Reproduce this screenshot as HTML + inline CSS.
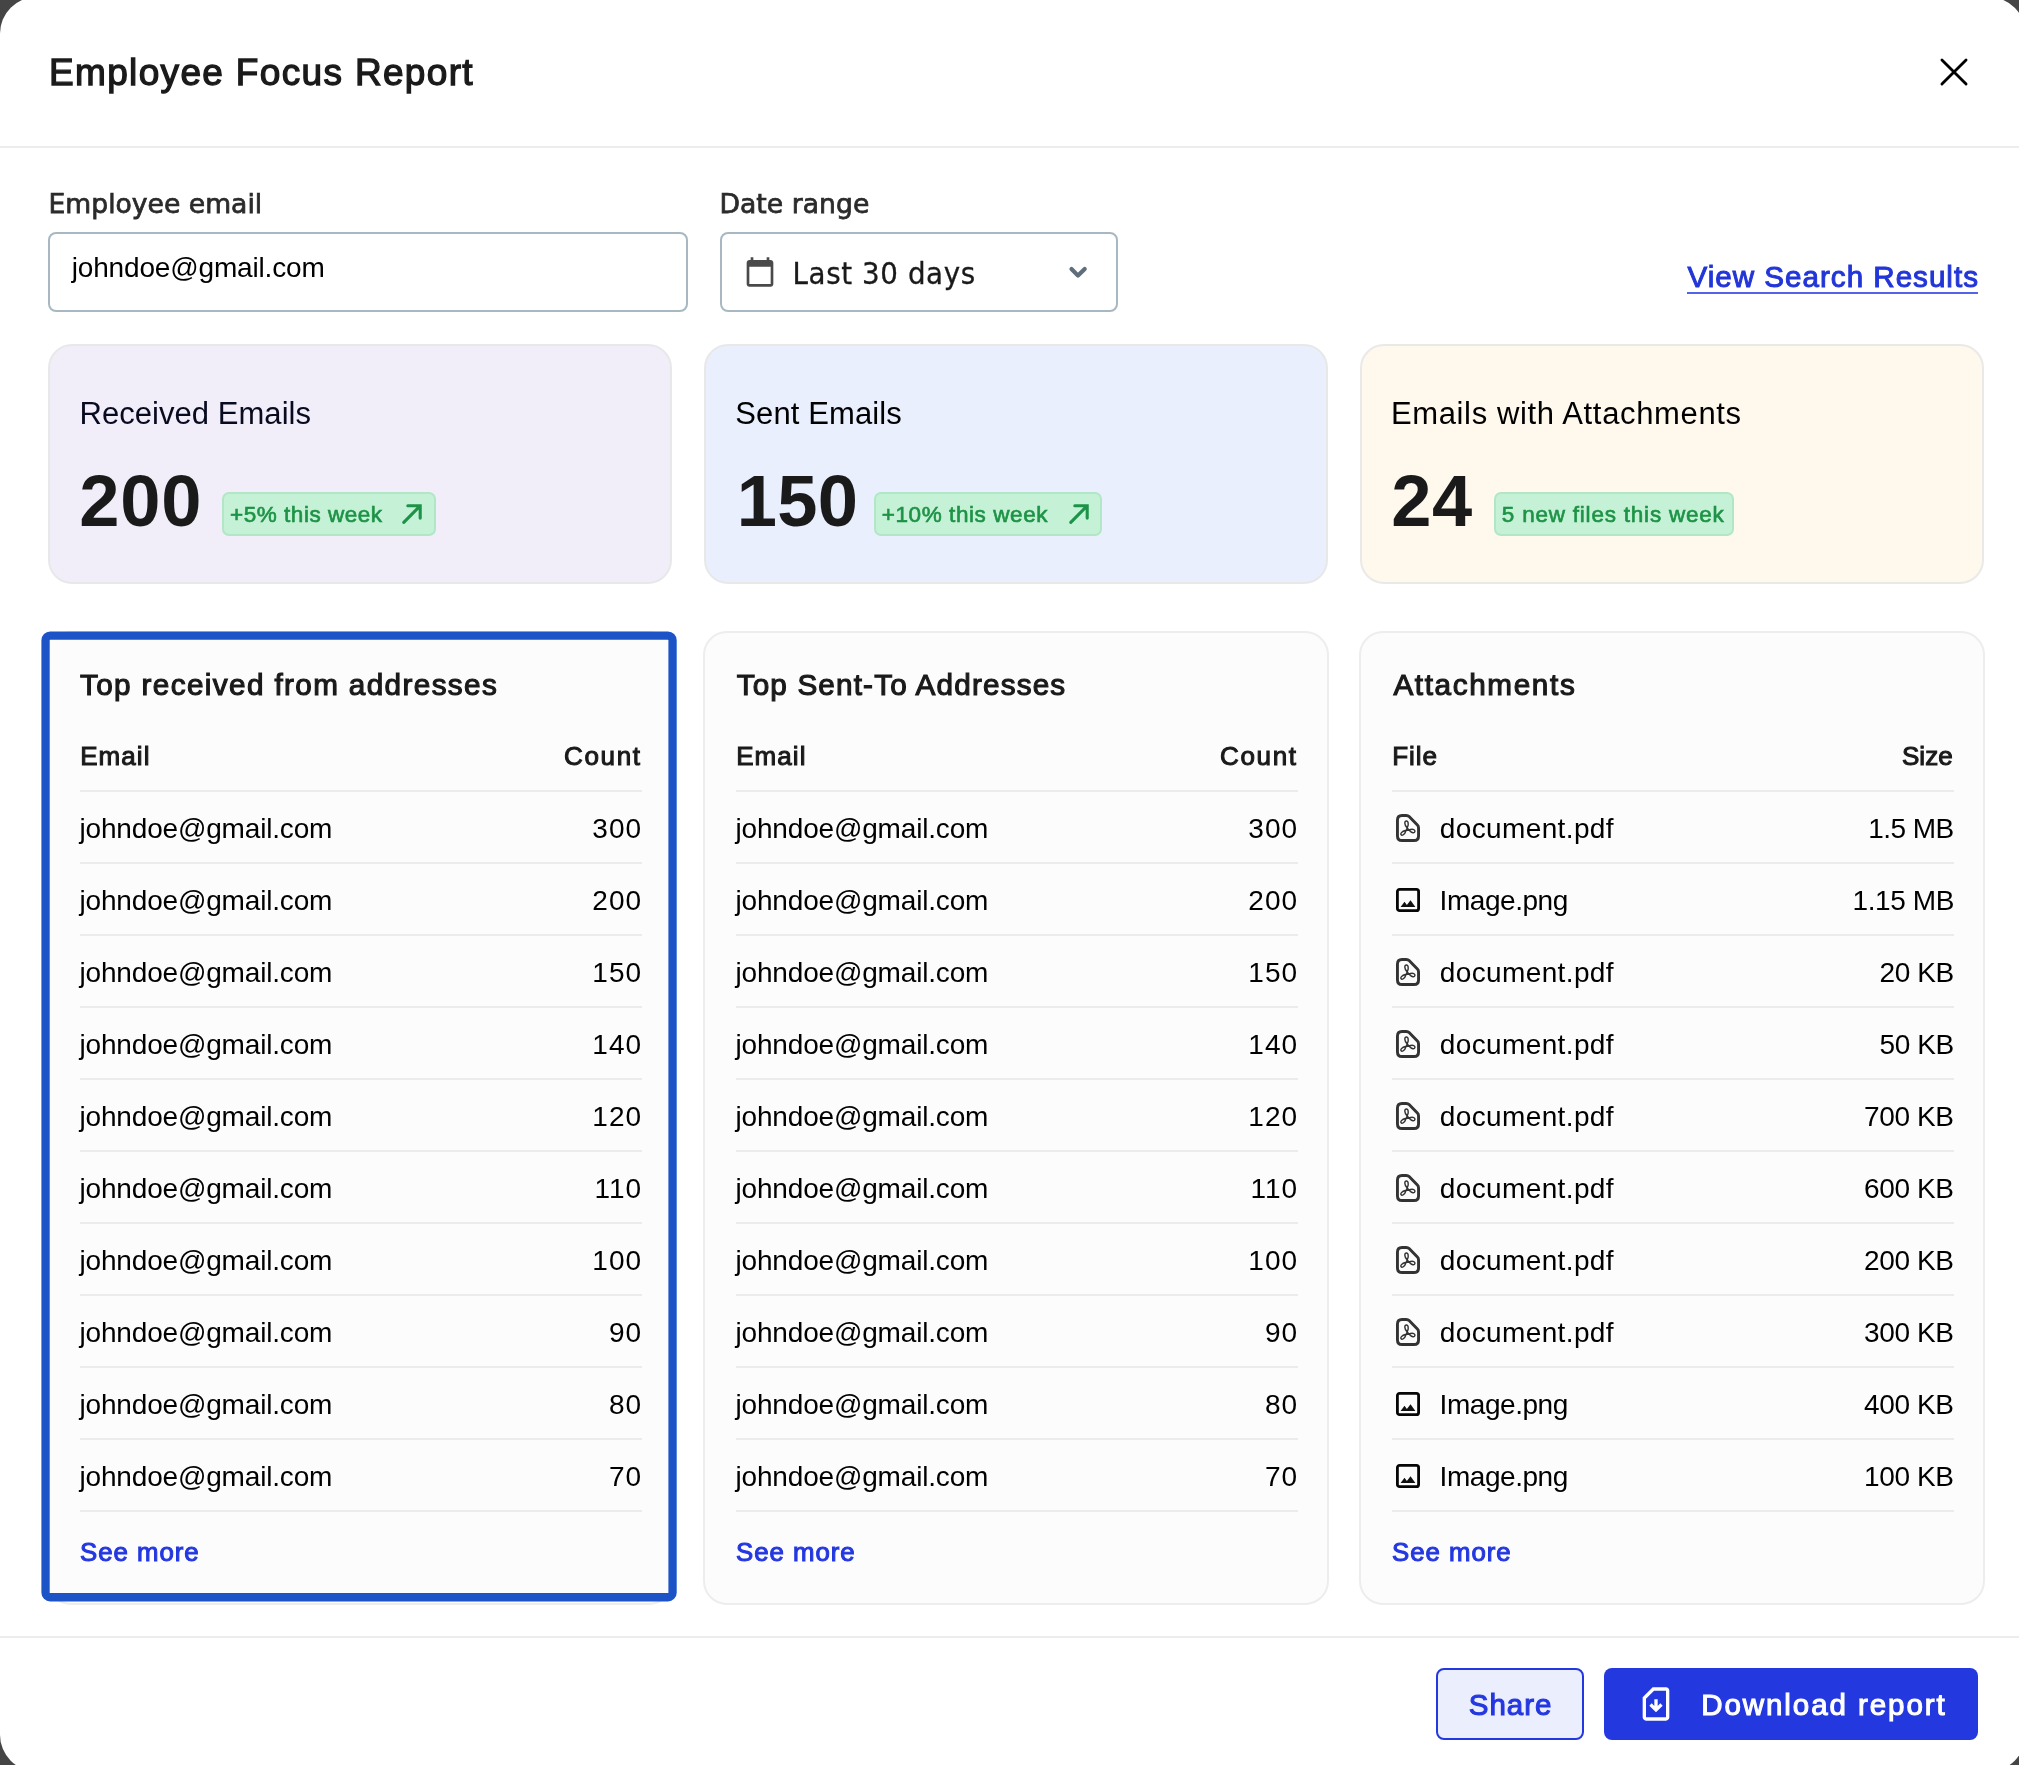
<!DOCTYPE html>
<html lang="en">
<head>
<meta charset="utf-8">
<title>Employee Focus Report</title>
<style>
*{box-sizing:border-box;margin:0;padding:0}
html,body{width:2019px;height:1765px;overflow:hidden;background:#454545;font-family:"Liberation Sans",Arial,sans-serif}
.page{position:absolute;left:0;top:0;width:2019px;height:1765px;overflow:hidden;will-change:transform}
.t{position:absolute;line-height:1;white-space:nowrap;font-weight:normal;font-style:normal;text-decoration:none}
.hr{position:absolute;left:0;width:2019px;height:2px;background:#ededed}
.field{position:absolute;top:232px;height:80px;border:2px solid #a8b8c3;border-radius:8px;background:#fff}
.stat{position:absolute;top:344px;width:624px;height:240px;border-radius:24px;border:2px solid}
.badge{position:absolute;top:492px;height:44px;border-radius:7px;background:#c5f1d7;border:2px solid #b1e7c6}
.card{position:absolute;top:631px;width:626px;height:974px;border-radius:24px;border:2px solid #ededed;background:#fcfcfc}
.sep{position:absolute;height:2px;width:562px;background:#ececec}
.btn{position:absolute;top:1668px;height:72px;border-radius:8px}
svg{position:absolute;overflow:visible}
</style>
</head>
<body>
<div class="page">
<svg style="left:0;top:0" width="2019" height="1765" viewBox="0 0 2019 1765"><rect x="0" y="-3" width="2025.4" height="1774.4" rx="36.5" fill="#fff"/></svg>
<header>
<h1 class="t" style="left:49.01px;top:54px;font-size:37px;color:#1a1a1a;letter-spacing:1.337px;-webkit-text-stroke:1.3px #1a1a1a;">Employee Focus Report</h1>
<svg style="left:1938px;top:56px" width="32" height="32" viewBox="0 0 32 32"><path d="M3.95 4.1 L28.05 27.9 M28.05 4.1 L3.95 27.9" stroke="#000" stroke-width="2.85" stroke-linecap="round" fill="none"/></svg>
<div class="hr" style="top:146px"></div>
</header>
<section>
<label class="t" style="left:48.54px;top:191px;font-size:26.6px;color:#2b2b2b;letter-spacing:0.011px;-webkit-text-stroke:0.75px #2b2b2b;font-family:'DejaVu Sans',sans-serif;">Employee email</label>
<div class="field" style="left:48px;width:640px"></div>
<div class="t" style="left:71.74px;top:254px;font-size:28px;color:#000;letter-spacing:-0.163px;">johndoe@gmail.com</div>
<label class="t" style="left:719.44px;top:191px;font-size:26.6px;color:#2b2b2b;letter-spacing:0.054px;-webkit-text-stroke:0.75px #2b2b2b;font-family:'DejaVu Sans',sans-serif;">Date range</label>
<div class="field" style="left:720px;width:398px"></div>
<svg style="left:744px;top:256px" width="32" height="32" viewBox="0 0 24 24"><path fill="#4a4a4a" d="M20 3h-1V1h-2v2H7V1H5v2H4c-1.1 0-2 .9-2 2v16c0 1.1.9 2 2 2h16c1.1 0 2-.9 2-2V5c0-1.1-.9-2-2-2zm0 18H4V8h16v13z"/></svg>
<div class="t" style="left:792.55px;top:258px;font-size:30.8px;color:#1a1a1a;letter-spacing:0.604px;-webkit-text-stroke:0.3px #1a1a1a;font-family:'DejaVu Sans Condensed','DejaVu Sans',sans-serif;font-stretch:condensed;">Last 30 days</div>
<svg style="left:1064px;top:258px" width="28" height="28" viewBox="0 0 28 28"><path d="M7.5 11 L14 17.6 L20.7 11" stroke="#5f6e7b" stroke-width="4.2" stroke-linecap="round" stroke-linejoin="round" fill="none"/></svg>
<a class="t" style="left:1687.55px;top:262px;font-size:29.6px;color:#2236d8;letter-spacing:0.994px;-webkit-text-stroke:1.0px #2236d8;">View Search Results</a>
<div style="position:absolute;left:1687px;top:292px;width:290.6px;height:2px;background:#5464e8"></div>
</section>
<section>
<div class="stat" style="left:48px;background:#f1eefa;border-color:#e8e8e9"></div>
<div class="stat" style="left:704px;background:#eaeffe;border-color:#e8e8e9"></div>
<div class="stat" style="left:1360px;background:#fff8ec;border-color:#e9e9e8"></div>
<h3 class="t" style="left:79.52px;top:398px;font-size:31px;color:#080b1f;letter-spacing:0.044px;">Received Emails</h3>
<h3 class="t" style="left:735.27px;top:398px;font-size:31px;color:#000;letter-spacing:0.111px;">Sent Emails</h3>
<h3 class="t" style="left:1390.92px;top:398px;font-size:31px;color:#000;letter-spacing:0.644px;">Emails with Attachments</h3>
<div class="t" style="left:79.19px;top:465px;font-size:72.3px;font-weight:bold;color:#1a1a1a;letter-spacing:0.852px;">200</div>
<div class="t" style="left:736.85px;top:465px;font-size:72.3px;font-weight:bold;color:#1a1a1a;letter-spacing:0.224px;">150</div>
<div class="t" style="left:1391.29px;top:465px;font-size:72.3px;font-weight:bold;color:#1a1a1a;letter-spacing:0.447px;">24</div>
<div class="badge" style="left:222px;width:214px"></div>
<div class="t" style="left:230.07px;top:504px;font-size:22.5px;color:#1d9346;letter-spacing:0.524px;-webkit-text-stroke:0.65px #1d9346;">+5% this week</div>
<svg style="left:400px;top:500px" width="28" height="28" viewBox="0 0 28 28"><path d="M7.8 5.8 H20.2 V18.1 M20.2 5.8 L3.8 22.3" stroke="#1c9347" stroke-width="3.1" stroke-linecap="round" stroke-linejoin="miter" fill="none"/></svg>
<div class="badge" style="left:874px;width:228px"></div>
<div class="t" style="left:881.77px;top:504px;font-size:22.5px;color:#1d9346;letter-spacing:0.579px;-webkit-text-stroke:0.65px #1d9346;">+10% this week</div>
<svg style="left:1066.7px;top:500px" width="28" height="28" viewBox="0 0 28 28"><path d="M7.8 5.8 H20.2 V18.1 M20.2 5.8 L3.8 22.3" stroke="#1c9347" stroke-width="3.1" stroke-linecap="round" stroke-linejoin="miter" fill="none"/></svg>
<div class="badge" style="left:1494px;width:240px"></div>
<div class="t" style="left:1501.80px;top:504px;font-size:22.5px;color:#1d9346;letter-spacing:0.785px;-webkit-text-stroke:0.65px #1d9346;">5 new files this week</div>
</section>
<section>
<div class="card" style="left:47px"></div>
<svg style="left:0;top:0" width="2019" height="1765" viewBox="0 0 2019 1765"><rect x="45.55" y="635.55" width="627" height="961.7" rx="4.6" fill="#fcfcfc" stroke="#1c54c8" stroke-width="8.3"/></svg>
<h2 class="t" style="left:80.03px;top:670px;font-size:29.7px;color:#1a1a1a;letter-spacing:1.369px;-webkit-text-stroke:1.15px #1a1a1a;">Top received from addresses</h2>
<div class="t" style="left:80.20px;top:743px;font-size:26.0px;color:#1a1a1a;letter-spacing:1.056px;-webkit-text-stroke:1.05px #1a1a1a;">Email</div>
<div class="t" style="left:564.11px;top:743px;font-size:26.0px;color:#1a1a1a;letter-spacing:1.635px;-webkit-text-stroke:1.05px #1a1a1a;">Count</div>
<div class="sep" style="left:80px;top:790px"></div>
<div class="sep" style="left:80px;top:862px"></div>
<div class="sep" style="left:80px;top:934px"></div>
<div class="sep" style="left:80px;top:1006px"></div>
<div class="sep" style="left:80px;top:1078px"></div>
<div class="sep" style="left:80px;top:1150px"></div>
<div class="sep" style="left:80px;top:1222px"></div>
<div class="sep" style="left:80px;top:1294px"></div>
<div class="sep" style="left:80px;top:1366px"></div>
<div class="sep" style="left:80px;top:1438px"></div>
<div class="sep" style="left:80px;top:1510px"></div>
<div class="t" style="left:79.54px;top:815px;font-size:28px;color:#000;letter-spacing:-0.176px;">johndoe@gmail.com</div>
<div class="t" style="left:592.32px;top:815px;font-size:28px;color:#000;letter-spacing:1.000px;">300</div>
<div class="t" style="left:79.54px;top:887px;font-size:28px;color:#000;letter-spacing:-0.176px;">johndoe@gmail.com</div>
<div class="t" style="left:592.32px;top:887px;font-size:28px;color:#000;letter-spacing:1.000px;">200</div>
<div class="t" style="left:79.54px;top:959px;font-size:28px;color:#000;letter-spacing:-0.176px;">johndoe@gmail.com</div>
<div class="t" style="left:592.32px;top:959px;font-size:28px;color:#000;letter-spacing:1.000px;">150</div>
<div class="t" style="left:79.54px;top:1031px;font-size:28px;color:#000;letter-spacing:-0.176px;">johndoe@gmail.com</div>
<div class="t" style="left:592.32px;top:1031px;font-size:28px;color:#000;letter-spacing:1.000px;">140</div>
<div class="t" style="left:79.54px;top:1103px;font-size:28px;color:#000;letter-spacing:-0.176px;">johndoe@gmail.com</div>
<div class="t" style="left:592.32px;top:1103px;font-size:28px;color:#000;letter-spacing:1.000px;">120</div>
<div class="t" style="left:79.54px;top:1175px;font-size:28px;color:#000;letter-spacing:-0.176px;">johndoe@gmail.com</div>
<div class="t" style="left:594.56px;top:1175px;font-size:28px;color:#000;letter-spacing:1.000px;">110</div>
<div class="t" style="left:79.54px;top:1247px;font-size:28px;color:#000;letter-spacing:-0.176px;">johndoe@gmail.com</div>
<div class="t" style="left:592.32px;top:1247px;font-size:28px;color:#000;letter-spacing:1.000px;">100</div>
<div class="t" style="left:79.54px;top:1319px;font-size:28px;color:#000;letter-spacing:-0.176px;">johndoe@gmail.com</div>
<div class="t" style="left:608.95px;top:1319px;font-size:28px;color:#000;letter-spacing:1.000px;">90</div>
<div class="t" style="left:79.54px;top:1391px;font-size:28px;color:#000;letter-spacing:-0.176px;">johndoe@gmail.com</div>
<div class="t" style="left:608.95px;top:1391px;font-size:28px;color:#000;letter-spacing:1.000px;">80</div>
<div class="t" style="left:79.54px;top:1463px;font-size:28px;color:#000;letter-spacing:-0.176px;">johndoe@gmail.com</div>
<div class="t" style="left:608.95px;top:1463px;font-size:28px;color:#000;letter-spacing:1.000px;">70</div>
<a class="t" style="left:80.10px;top:1540px;font-size:25.8px;color:#2438e0;letter-spacing:0.966px;-webkit-text-stroke:1.05px #2438e0;">See more</a>
<div class="card" style="left:703px"></div>
<h2 class="t" style="left:736.63px;top:670px;font-size:29.7px;color:#1a1a1a;letter-spacing:1.162px;-webkit-text-stroke:1.15px #1a1a1a;">Top Sent-To Addresses</h2>
<div class="t" style="left:736.20px;top:743px;font-size:26.0px;color:#1a1a1a;letter-spacing:1.056px;-webkit-text-stroke:1.05px #1a1a1a;">Email</div>
<div class="t" style="left:1220.11px;top:743px;font-size:26.0px;color:#1a1a1a;letter-spacing:1.635px;-webkit-text-stroke:1.05px #1a1a1a;">Count</div>
<div class="sep" style="left:736px;top:790px"></div>
<div class="sep" style="left:736px;top:862px"></div>
<div class="sep" style="left:736px;top:934px"></div>
<div class="sep" style="left:736px;top:1006px"></div>
<div class="sep" style="left:736px;top:1078px"></div>
<div class="sep" style="left:736px;top:1150px"></div>
<div class="sep" style="left:736px;top:1222px"></div>
<div class="sep" style="left:736px;top:1294px"></div>
<div class="sep" style="left:736px;top:1366px"></div>
<div class="sep" style="left:736px;top:1438px"></div>
<div class="sep" style="left:736px;top:1510px"></div>
<div class="t" style="left:735.54px;top:815px;font-size:28px;color:#000;letter-spacing:-0.176px;">johndoe@gmail.com</div>
<div class="t" style="left:1248.32px;top:815px;font-size:28px;color:#000;letter-spacing:1.000px;">300</div>
<div class="t" style="left:735.54px;top:887px;font-size:28px;color:#000;letter-spacing:-0.176px;">johndoe@gmail.com</div>
<div class="t" style="left:1248.32px;top:887px;font-size:28px;color:#000;letter-spacing:1.000px;">200</div>
<div class="t" style="left:735.54px;top:959px;font-size:28px;color:#000;letter-spacing:-0.176px;">johndoe@gmail.com</div>
<div class="t" style="left:1248.32px;top:959px;font-size:28px;color:#000;letter-spacing:1.000px;">150</div>
<div class="t" style="left:735.54px;top:1031px;font-size:28px;color:#000;letter-spacing:-0.176px;">johndoe@gmail.com</div>
<div class="t" style="left:1248.32px;top:1031px;font-size:28px;color:#000;letter-spacing:1.000px;">140</div>
<div class="t" style="left:735.54px;top:1103px;font-size:28px;color:#000;letter-spacing:-0.176px;">johndoe@gmail.com</div>
<div class="t" style="left:1248.32px;top:1103px;font-size:28px;color:#000;letter-spacing:1.000px;">120</div>
<div class="t" style="left:735.54px;top:1175px;font-size:28px;color:#000;letter-spacing:-0.176px;">johndoe@gmail.com</div>
<div class="t" style="left:1250.56px;top:1175px;font-size:28px;color:#000;letter-spacing:1.000px;">110</div>
<div class="t" style="left:735.54px;top:1247px;font-size:28px;color:#000;letter-spacing:-0.176px;">johndoe@gmail.com</div>
<div class="t" style="left:1248.32px;top:1247px;font-size:28px;color:#000;letter-spacing:1.000px;">100</div>
<div class="t" style="left:735.54px;top:1319px;font-size:28px;color:#000;letter-spacing:-0.176px;">johndoe@gmail.com</div>
<div class="t" style="left:1264.95px;top:1319px;font-size:28px;color:#000;letter-spacing:1.000px;">90</div>
<div class="t" style="left:735.54px;top:1391px;font-size:28px;color:#000;letter-spacing:-0.176px;">johndoe@gmail.com</div>
<div class="t" style="left:1264.95px;top:1391px;font-size:28px;color:#000;letter-spacing:1.000px;">80</div>
<div class="t" style="left:735.54px;top:1463px;font-size:28px;color:#000;letter-spacing:-0.176px;">johndoe@gmail.com</div>
<div class="t" style="left:1264.95px;top:1463px;font-size:28px;color:#000;letter-spacing:1.000px;">70</div>
<a class="t" style="left:736.10px;top:1540px;font-size:25.8px;color:#2438e0;letter-spacing:0.966px;-webkit-text-stroke:1.05px #2438e0;">See more</a>
<div class="card" style="left:1359px"></div>
<h2 class="t" style="left:1393.38px;top:670px;font-size:29.7px;color:#1a1a1a;letter-spacing:1.635px;-webkit-text-stroke:1.15px #1a1a1a;">Attachments</h2>
<div class="t" style="left:1392.20px;top:743px;font-size:26.0px;color:#1a1a1a;letter-spacing:0.954px;-webkit-text-stroke:1.05px #1a1a1a;">File</div>
<div class="t" style="left:1901.94px;top:743px;font-size:26.0px;color:#1a1a1a;letter-spacing:0.068px;-webkit-text-stroke:1.05px #1a1a1a;">Size</div>
<div class="sep" style="left:1392px;top:790px"></div>
<div class="sep" style="left:1392px;top:862px"></div>
<div class="sep" style="left:1392px;top:934px"></div>
<div class="sep" style="left:1392px;top:1006px"></div>
<div class="sep" style="left:1392px;top:1078px"></div>
<div class="sep" style="left:1392px;top:1150px"></div>
<div class="sep" style="left:1392px;top:1222px"></div>
<div class="sep" style="left:1392px;top:1294px"></div>
<div class="sep" style="left:1392px;top:1366px"></div>
<div class="sep" style="left:1392px;top:1438px"></div>
<div class="sep" style="left:1392px;top:1510px"></div>
<svg style="left:1396px;top:814px" width="24" height="28" viewBox="0 0 24 28"><path d="M1.45 6 Q1.45 1.45 6 1.45 H10.3 Q12 1.45 13.1 2.6 L21.4 11.1 Q22.55 12.3 22.55 14 V22 Q22.55 26.55 18 26.55 H6 Q1.45 26.55 1.45 22 Z" stroke="#333" stroke-width="2.9" fill="none" stroke-linejoin="round"/><path d="M11.2 14 C4 5.5 15.7 3.8 11.2 14 L10.2 16.2 C0 18.7 6.8 26.1 10.2 16.2 L12.9 16 C22.3 12.7 19.5 23.5 12.9 16 Z" stroke="#333" stroke-width="1.45" fill="none" stroke-linejoin="round"/></svg>
<div class="t" style="left:1439.85px;top:815px;font-size:28px;color:#000;letter-spacing:0.368px;">document.pdf</div>
<div class="t" style="left:1868.18px;top:815px;font-size:28px;color:#000;letter-spacing:-0.535px;">1.5 MB</div>
<svg style="left:1396px;top:888px" width="24" height="24" viewBox="0 0 24 24"><rect x="1.4" y="1.4" width="21.2" height="21.2" rx="2.2" stroke="#060606" stroke-width="2.8" fill="none"/><path d="M4.6 19 L8.5 13.8 L10.9 17 L14.5 12.2 L19.4 19 Z" fill="#111"/></svg>
<div class="t" style="left:1439.59px;top:887px;font-size:28px;color:#000;letter-spacing:-0.447px;">Image.png</div>
<div class="t" style="left:1852.48px;top:887px;font-size:28px;color:#000;letter-spacing:-0.402px;">1.15 MB</div>
<svg style="left:1396px;top:958px" width="24" height="28" viewBox="0 0 24 28"><path d="M1.45 6 Q1.45 1.45 6 1.45 H10.3 Q12 1.45 13.1 2.6 L21.4 11.1 Q22.55 12.3 22.55 14 V22 Q22.55 26.55 18 26.55 H6 Q1.45 26.55 1.45 22 Z" stroke="#333" stroke-width="2.9" fill="none" stroke-linejoin="round"/><path d="M11.2 14 C4 5.5 15.7 3.8 11.2 14 L10.2 16.2 C0 18.7 6.8 26.1 10.2 16.2 L12.9 16 C22.3 12.7 19.5 23.5 12.9 16 Z" stroke="#333" stroke-width="1.45" fill="none" stroke-linejoin="round"/></svg>
<div class="t" style="left:1439.85px;top:959px;font-size:28px;color:#000;letter-spacing:0.368px;">document.pdf</div>
<div class="t" style="left:1879.47px;top:959px;font-size:28px;color:#000;letter-spacing:-0.400px;">20 KB</div>
<svg style="left:1396px;top:1030px" width="24" height="28" viewBox="0 0 24 28"><path d="M1.45 6 Q1.45 1.45 6 1.45 H10.3 Q12 1.45 13.1 2.6 L21.4 11.1 Q22.55 12.3 22.55 14 V22 Q22.55 26.55 18 26.55 H6 Q1.45 26.55 1.45 22 Z" stroke="#333" stroke-width="2.9" fill="none" stroke-linejoin="round"/><path d="M11.2 14 C4 5.5 15.7 3.8 11.2 14 L10.2 16.2 C0 18.7 6.8 26.1 10.2 16.2 L12.9 16 C22.3 12.7 19.5 23.5 12.9 16 Z" stroke="#333" stroke-width="1.45" fill="none" stroke-linejoin="round"/></svg>
<div class="t" style="left:1439.85px;top:1031px;font-size:28px;color:#000;letter-spacing:0.368px;">document.pdf</div>
<div class="t" style="left:1879.47px;top:1031px;font-size:28px;color:#000;letter-spacing:-0.400px;">50 KB</div>
<svg style="left:1396px;top:1102px" width="24" height="28" viewBox="0 0 24 28"><path d="M1.45 6 Q1.45 1.45 6 1.45 H10.3 Q12 1.45 13.1 2.6 L21.4 11.1 Q22.55 12.3 22.55 14 V22 Q22.55 26.55 18 26.55 H6 Q1.45 26.55 1.45 22 Z" stroke="#333" stroke-width="2.9" fill="none" stroke-linejoin="round"/><path d="M11.2 14 C4 5.5 15.7 3.8 11.2 14 L10.2 16.2 C0 18.7 6.8 26.1 10.2 16.2 L12.9 16 C22.3 12.7 19.5 23.5 12.9 16 Z" stroke="#333" stroke-width="1.45" fill="none" stroke-linejoin="round"/></svg>
<div class="t" style="left:1439.85px;top:1103px;font-size:28px;color:#000;letter-spacing:0.368px;">document.pdf</div>
<div class="t" style="left:1864.10px;top:1103px;font-size:28px;color:#000;letter-spacing:-0.400px;">700 KB</div>
<svg style="left:1396px;top:1174px" width="24" height="28" viewBox="0 0 24 28"><path d="M1.45 6 Q1.45 1.45 6 1.45 H10.3 Q12 1.45 13.1 2.6 L21.4 11.1 Q22.55 12.3 22.55 14 V22 Q22.55 26.55 18 26.55 H6 Q1.45 26.55 1.45 22 Z" stroke="#333" stroke-width="2.9" fill="none" stroke-linejoin="round"/><path d="M11.2 14 C4 5.5 15.7 3.8 11.2 14 L10.2 16.2 C0 18.7 6.8 26.1 10.2 16.2 L12.9 16 C22.3 12.7 19.5 23.5 12.9 16 Z" stroke="#333" stroke-width="1.45" fill="none" stroke-linejoin="round"/></svg>
<div class="t" style="left:1439.85px;top:1175px;font-size:28px;color:#000;letter-spacing:0.368px;">document.pdf</div>
<div class="t" style="left:1864.10px;top:1175px;font-size:28px;color:#000;letter-spacing:-0.400px;">600 KB</div>
<svg style="left:1396px;top:1246px" width="24" height="28" viewBox="0 0 24 28"><path d="M1.45 6 Q1.45 1.45 6 1.45 H10.3 Q12 1.45 13.1 2.6 L21.4 11.1 Q22.55 12.3 22.55 14 V22 Q22.55 26.55 18 26.55 H6 Q1.45 26.55 1.45 22 Z" stroke="#333" stroke-width="2.9" fill="none" stroke-linejoin="round"/><path d="M11.2 14 C4 5.5 15.7 3.8 11.2 14 L10.2 16.2 C0 18.7 6.8 26.1 10.2 16.2 L12.9 16 C22.3 12.7 19.5 23.5 12.9 16 Z" stroke="#333" stroke-width="1.45" fill="none" stroke-linejoin="round"/></svg>
<div class="t" style="left:1439.85px;top:1247px;font-size:28px;color:#000;letter-spacing:0.368px;">document.pdf</div>
<div class="t" style="left:1864.10px;top:1247px;font-size:28px;color:#000;letter-spacing:-0.400px;">200 KB</div>
<svg style="left:1396px;top:1318px" width="24" height="28" viewBox="0 0 24 28"><path d="M1.45 6 Q1.45 1.45 6 1.45 H10.3 Q12 1.45 13.1 2.6 L21.4 11.1 Q22.55 12.3 22.55 14 V22 Q22.55 26.55 18 26.55 H6 Q1.45 26.55 1.45 22 Z" stroke="#333" stroke-width="2.9" fill="none" stroke-linejoin="round"/><path d="M11.2 14 C4 5.5 15.7 3.8 11.2 14 L10.2 16.2 C0 18.7 6.8 26.1 10.2 16.2 L12.9 16 C22.3 12.7 19.5 23.5 12.9 16 Z" stroke="#333" stroke-width="1.45" fill="none" stroke-linejoin="round"/></svg>
<div class="t" style="left:1439.85px;top:1319px;font-size:28px;color:#000;letter-spacing:0.368px;">document.pdf</div>
<div class="t" style="left:1864.10px;top:1319px;font-size:28px;color:#000;letter-spacing:-0.400px;">300 KB</div>
<svg style="left:1396px;top:1392px" width="24" height="24" viewBox="0 0 24 24"><rect x="1.4" y="1.4" width="21.2" height="21.2" rx="2.2" stroke="#060606" stroke-width="2.8" fill="none"/><path d="M4.6 19 L8.5 13.8 L10.9 17 L14.5 12.2 L19.4 19 Z" fill="#111"/></svg>
<div class="t" style="left:1439.59px;top:1391px;font-size:28px;color:#000;letter-spacing:-0.447px;">Image.png</div>
<div class="t" style="left:1864.10px;top:1391px;font-size:28px;color:#000;letter-spacing:-0.400px;">400 KB</div>
<svg style="left:1396px;top:1464px" width="24" height="24" viewBox="0 0 24 24"><rect x="1.4" y="1.4" width="21.2" height="21.2" rx="2.2" stroke="#060606" stroke-width="2.8" fill="none"/><path d="M4.6 19 L8.5 13.8 L10.9 17 L14.5 12.2 L19.4 19 Z" fill="#111"/></svg>
<div class="t" style="left:1439.59px;top:1463px;font-size:28px;color:#000;letter-spacing:-0.447px;">Image.png</div>
<div class="t" style="left:1864.10px;top:1463px;font-size:28px;color:#000;letter-spacing:-0.400px;">100 KB</div>
<a class="t" style="left:1392.10px;top:1540px;font-size:25.8px;color:#2438e0;letter-spacing:0.966px;-webkit-text-stroke:1.05px #2438e0;">See more</a>
</section>
<footer>
<div class="hr" style="top:1636px"></div>
<div class="btn" style="left:1436px;width:148px;background:#ebeefc;border:2px solid #2438e0"></div>
<div class="t" style="left:1468.74px;top:1690px;font-size:29.5px;color:#2438e0;letter-spacing:0.986px;-webkit-text-stroke:1.1px #2438e0;">Share</div>
<div class="btn" style="left:1604px;width:374px;background:#2438e0"></div>
<svg style="left:1636px;top:1684px" width="40" height="40" viewBox="0 0 24 24"><path fill="#fff" d="M18 2h-8L4 8v12c0 1.1.9 2 2 2h12c1.1 0 2-.9 2-2V4c0-1.1-.9-2-2-2zm0 2v16H6V8.83L10.83 4H18z"/><path fill="#fff" d="M16 13l-4 4-4-4 1.41-1.41L11 13.17V9.09h2v4.08l1.59-1.59L16 13z"/></svg>
<div class="t" style="left:1701.18px;top:1690px;font-size:29.5px;color:#fff;letter-spacing:1.936px;-webkit-text-stroke:1.1px #fff;">Download report</div>
</footer>
</div>
</body>
</html>
